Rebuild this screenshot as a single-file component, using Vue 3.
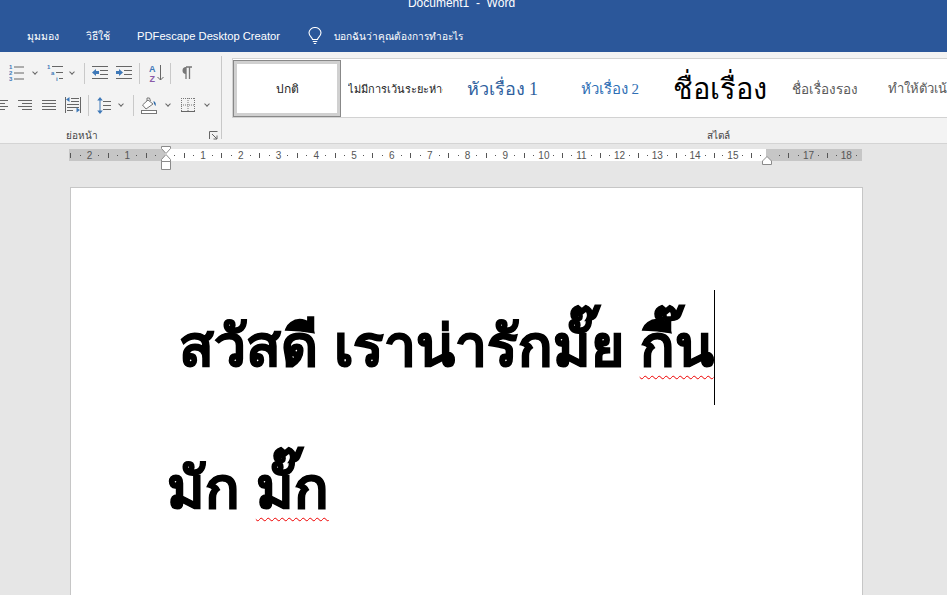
<script setup>
const styles = [
  { label: 'ปกติ', cls: 'normal' },
  { label: 'ไม่มีการเว้นระยะห่าง', cls: 'nospace' },
  { label: 'หัวเรื่อง 1', cls: 'h1' },
  { label: 'หัวเรื่อง 2', cls: 'h2' },
  { label: 'ชื่อเรื่อง', cls: 'title' },
  { label: 'ชื่อเรื่องรอง', cls: 'sub' },
  { label: 'ทำให้ตัวเน้นละเอียด', cls: 'emph' },
]

// one cell per cm, the first starts left of the visible ruler
// labels 0 and 16 sit under the margin markers so they stay blank
const rulerCells = []
for (const n of [3, 2, 1]) rulerCells.push({ id: 'l' + n, label: n === 3 ? '' : n })
for (let n = 0; n <= 18; n++) rulerCells.push({ id: 'r' + n, label: n === 0 || n === 16 ? '' : n })
</script>

<template>
  <div class="word">
    <div class="titlebar">Document1 &nbsp;-&nbsp; Word</div>

    <nav class="tabs">
      <span class="tab">มุมมอง</span>
      <span class="tab">วิธีใช้</span>
      <span class="tab pdf">PDFescape Desktop Creator</span>
      <span class="tell">
        <svg width="14" height="18" viewBox="0 0 14 18" fill="none" stroke="#fff" stroke-width="1.1">
          <path d="M4.500 12.500c0-2-3.500-3.200-3.500-6.700a6 5.300 0 0 1 12 0c0 3.500-3.500 4.700-3.500 6.700z" />
          <path d="M4.800 14.500h4.400M5.800 16.500h2.400" />
        </svg>
        <span class="tell-text">บอกฉันว่าคุณต้องการทำอะไร</span>
      </span>
    </nav>

    <section class="ribbon">
      <div class="group para">
        <div class="para-rows">
          <div class="tools row-top">
            <svg class="g9" width="15" height="18" viewBox="0 0 15 18"><g fill="#3f79b8" font-size="6" font-family="Liberation Sans" font-weight="700"><text x="0" y="5">1</text><text x="0" y="11">2</text><text x="0" y="17">3</text></g><path d="M5 3h10M5 9h10M5 15h10" stroke="#666" /></svg>
            <span class="caret g7" />
            <svg class="g9" width="17" height="18" viewBox="0 0 17 18"><g fill="#3f79b8" font-size="6" font-family="Liberation Sans" font-weight="700"><text x="0" y="5">1</text><text x="4" y="11">a</text><text x="9" y="17">i</text></g><path d="M5 2.500h11M9 8.500h7M12 14.500h4" stroke="#666" /></svg>
            <span class="caret g4" />
            <span class="sep g9" />
            <svg class="g7" width="16" height="14" viewBox="0 0 16 14"><path d="M0 .5h16M8 4.500h8M8 8.500h8M0 12.500h16" stroke="#666" /><path d="M0 6.500l4-3.500v2h3v3H4v2z" fill="#3f79b8" /></svg>
            <svg class="g8" width="16" height="14" viewBox="0 0 16 14"><path d="M0 .5h16M8 4.500h8M8 8.500h8M0 12.500h16" stroke="#666" /><path d="M7 6.500L3 3v2H0v3h3v2z" fill="#3f79b8" /></svg>
            <span class="sep g7" />
            <svg class="g9" width="15" height="18" viewBox="0 0 15 18"><text x="0" y="8" font-size="9" font-family="Liberation Sans" font-weight="700" fill="#3f79b8">A</text><text x=".5" y="17.500" font-size="9" font-family="Liberation Sans" font-weight="700" fill="#8a5aa8">Z</text><path d="M11.500 1v15M8.500 13l3 3 3-3" stroke="#666" fill="none" /></svg>
            <span class="sep g6" />
            <svg class="g10" width="11" height="14" viewBox="0 0 11 14"><path d="M5 1h6M5 1v12M8.500 1v12" stroke="#777" stroke-width="1.300" fill="none" /><path d="M5 1a3.300 3.300 0 0 0 0 7z" fill="#777" /></svg>
          </div>
          <div class="tools row-bottom">
            <svg width="8" height="10" viewBox="0 0 8 10"><path d="M0 .5h8M0 3.500h5M0 6.500h8M0 9.500h5" stroke="#666" /></svg>
            <svg class="g10" width="14" height="10" viewBox="0 0 14 10"><path d="M0 .5h14M4 3.500h10M0 6.500h14M4 9.500h10" stroke="#666" /></svg>
            <svg class="g10" width="14" height="10" viewBox="0 0 14 10"><path d="M0 .5h14M0 3.500h14M0 6.500h14M0 9.500h14" stroke="#666" /></svg>
            <svg class="g9" width="16" height="16" viewBox="0 0 16 16"><path d="M.5 0v16M15.500 0v16M6 1.500h8M6 4.500h8M2 7.500h12M2 10.500h12M2 13.500h6" stroke="#666" /><path d="M1 2.500L4.500 0v5zM15 13l-3.500-2.500v5z" fill="#3f79b8" /></svg>
            <span class="sep g7" />
            <svg class="g8" width="14" height="17" viewBox="0 0 14 17"><path d="M6 4.500h8M6 8.500h8M6 12.500h8" stroke="#666" /><path d="M3 0L.2 3.500h5.600zM3 17L.2 13.500h5.600z" fill="#3f79b8" /><path d="M3 3v11" stroke="#3f79b8" /></svg>
            <span class="caret g6" />
            <span class="sep g9" />
            <svg class="g7" width="16" height="17" viewBox="0 0 16 17"><path d="M7 3L1.500 8l3.500 4 7-5z" fill="#fff" stroke="#777" /><path d="M6 4V1h2.500l1 3" fill="none" stroke="#777" /><path d="M12.500 4c2.500 1 2.500 3.500 2 5-1-1-2-3-2-5z" fill="#2f6aa8" /><rect x=".5" y="13.500" width="15" height="3" fill="#fff" stroke="#777" /></svg>
            <span class="caret g7" />
            <svg class="g10" width="14" height="14" viewBox="0 0 14 14"><path d="M0 .5h14M0 7h14M7 0v14M.5 0v14M13.500 0v14" stroke="#777" stroke-dasharray="1 1" fill="none" /><path d="M0 13.500h14" stroke="#666" /></svg>
            <span class="caret g8" />
          </div>
        </div>
        <div class="group-label para-label">ย่อหน้า
          <svg class="launcher" width="9" height="9" viewBox="0 0 9 9" fill="none" stroke="#666"><path d="M.5 8V.5H8.500M3 3l5 5M8 4.500V8H4.500" /></svg>
        </div>
      </div>

      <div class="group stylegroup">
        <div class="gallery">
          <div v-for="s in styles" :key="s.cls" class="style-item" :class="s.cls">
            <span>{{ s.label }}</span>
          </div>
        </div>
        <div class="group-label style-label">สไตล์</div>
      </div>
    </section>

    <main class="workspace">
      <div class="ruler">
        <div class="ruler-track">
          <div v-for="c in rulerCells" :key="c.id" class="ruler-cell">
            <b>{{ c.label }}</b><i class="tick-dot" /><i class="tick-bar" /><i class="tick-dot" />
          </div>
        </div>
        <svg class="marker-left" width="10" height="24" viewBox="0 0 10 24" fill="#fff" stroke="#8a8a8a"><path d="M.5 .5h9v2L5 7.500.5 2.500zM5 8.500l4.500 5v2h-9v-2zM.5 15.500h9v8h-9z" /></svg>
        <svg class="marker-right" width="10" height="9" viewBox="0 0 10 9" fill="#fff" stroke="#8a8a8a"><path d="M5 .5l4.500 4.500v3.500h-9V5z" /></svg>
      </div>

      <div class="page">
        <p class="doc-line first">สวัสดี เราน่ารักมั๊ย <span class="squiggle">กี๊น</span><i class="caret-bar" /></p>
        <p class="doc-line">มัก <span class="squiggle">มั๊ก</span></p>
      </div>
    </main>
  </div>
</template>

<style>
html, body { margin: 0; height: 100%; overflow: hidden; background: #e6e6e6; }
</style>

<style scoped>
.word {
  width: 947px;
  height: 595px;
  overflow: hidden;
  display: flex;
  flex-direction: column;
  font-family: "Noto Sans", "Liberation Sans", sans-serif;
  background: #e6e6e6;
}
.titlebar {
  flex: none;
  height: 22px;
  padding-right: 24px;
  box-sizing: border-box;
  text-align: center;
  color: #fff;
  background: #2b579a;
  font: 12px/6px "Liberation Sans", sans-serif;
}
.tabs {
  flex: none;
  height: 30px;
  box-sizing: border-box;
  padding: 0 0 2px 27px;
  background: #2b579a;
  color: #fff;
  display: flex;
  align-items: center;
  font-size: 10.5px;
}
.tab + .tab { margin-left: 27px; }
.tab.pdf { font: 11.2px "Liberation Sans", sans-serif; }
.tell { display: flex; align-items: center; margin-left: 28px; gap: 12px; }
.tell-text { font-size: 10.100px; }

.ribbon {
  flex: none;
  height: 92px;
  box-sizing: border-box;
  background: #f3f3f3;
  border-bottom: 1px solid #d4d4d4;
  display: flex;
}
.group { display: flex; flex-direction: column; }
.para {
  flex: none;
  width: 222px;
  height: 83px;
  margin-top: 4px;
  box-sizing: border-box;
  border-right: 1px solid #c8c8c8;
}
.para-rows { flex: none; height: 72px; }
.tools { display: flex; align-items: center; height: 22px; }
.row-top { margin-top: 6px; }
.row-bottom { margin-top: 10px; }
.g4 { margin-left: 4px; }
.g6 { margin-left: 6px; }
.g7 { margin-left: 7px; }
.g8 { margin-left: 8px; }
.g9 { margin-left: 9px; }
.g10 { margin-left: 10px; }
.sep { flex: none; width: 1px; height: 21px; background: #c9c9c9; }
.caret { flex: none; width: 7px; height: 5px; display: flex; justify-content: center; }
.caret::before {
  content: "";
  width: 3px;
  height: 3px;
  margin-top: -1px;
  border: solid #666;
  border-width: 0 1px 1px 0;
  transform: rotate(45deg);
}
.group-label {
  flex: none;
  position: relative;
  text-align: center;
  font-size: 10px;
  line-height: 14px;
  color: #444;
}
.para-label { padding-right: 58px; }
.style-label { padding-left: 268px; }
.launcher { position: absolute; right: 3px; top: 3px; }
.stylegroup { flex: 1; min-width: 0; }
.gallery {
  flex: none;
  display: flex;
  height: 60px;
  margin: 6px 0 10px 10px;
  padding-top: 1px;
  box-sizing: border-box;
  border: 1px solid #d2d2d2;
  border-right: 0;
  background: #fff;
  overflow: hidden;
}
.style-item {
  flex: none;
  width: 107.500px;
  display: flex;
  align-items: center;
  justify-content: center;
  white-space: nowrap;
  overflow: hidden;
  box-sizing: border-box;
  font-size: 11px;
  color: #222;
}
.style-item.normal {
  width: 108px;
  border: 1px solid #888;
  box-shadow: inset 0 0 0 3px #d0d0d0;
  font-size: 12px;
}
.style-item.nospace { justify-content: flex-start; padding: 0 4px 0 7px; }
.style-item.nospace span { width: 95px; overflow: hidden; }
.style-item.h1 { font: 18px "Liberation Serif", serif; color: #2f5f9e; }
.style-item.h2 { font: 15px "Liberation Serif", serif; color: #2f6fb5; }
.style-item.title { font: 29px "Liberation Serif", serif; color: #000; padding-left: 6px; }
.style-item.sub { color: #595959; font-size: 13.500px; }
.style-item.emph { color: #595959; font-size: 13px; justify-content: flex-start; padding-left: 9px; }

.workspace { flex: 1; min-height: 0; }
.ruler {
  position: relative;
  width: 793px;
  height: 12px;
  margin: 5px 0 0 69px;
  background: linear-gradient(90deg, #c6c6c6 96px, #fff 96px, #fff 697px, #c6c6c6 697px);
}
.ruler-track { display: flex; height: 100%; margin-left: -22px; overflow: hidden; clip-path: inset(0 0 0 22px); }
.ruler-cell {
  flex: none;
  width: 37.800px;
  display: grid;
  grid-template-columns: repeat(4, 1fr);
  align-items: center;
  justify-items: center;
  font-size: 10px;
  color: #555;
}
.ruler-cell b { font-weight: 400; font-family: "Liberation Sans", sans-serif; }
.tick-dot { width: 1px; height: 1px; background: #555; }
.tick-bar { width: 1px; height: 5px; background: #555; }
.marker-left { position: absolute; left: 92px; top: -3px; }
.marker-right { position: absolute; left: 693px; top: 7px; }

.page {
  width: 793px;
  height: 420px;
  margin: 26px 0 0 70px;
  box-sizing: border-box;
  background: #fff;
  border: 1px solid #c6c6c6;
  border-bottom: 0;
  padding: 85px 0 0 96px;
}
.doc-line {
  position: relative;
  margin: 0;
  font-size: 57px;
  font-weight: 700;
  line-height: 142px;
  word-spacing: 1px;
  white-space: nowrap;
  color: #000;
  -webkit-text-stroke: 1.200px #000;
}
.doc-line.first { text-indent: 12px; }
.squiggle {
  text-decoration: underline wavy #e00 1px;
  text-underline-offset: 9px;
}
.caret-bar { position: absolute; top: 17px; width: 1px; height: 115px; background: #000; }
</style>
